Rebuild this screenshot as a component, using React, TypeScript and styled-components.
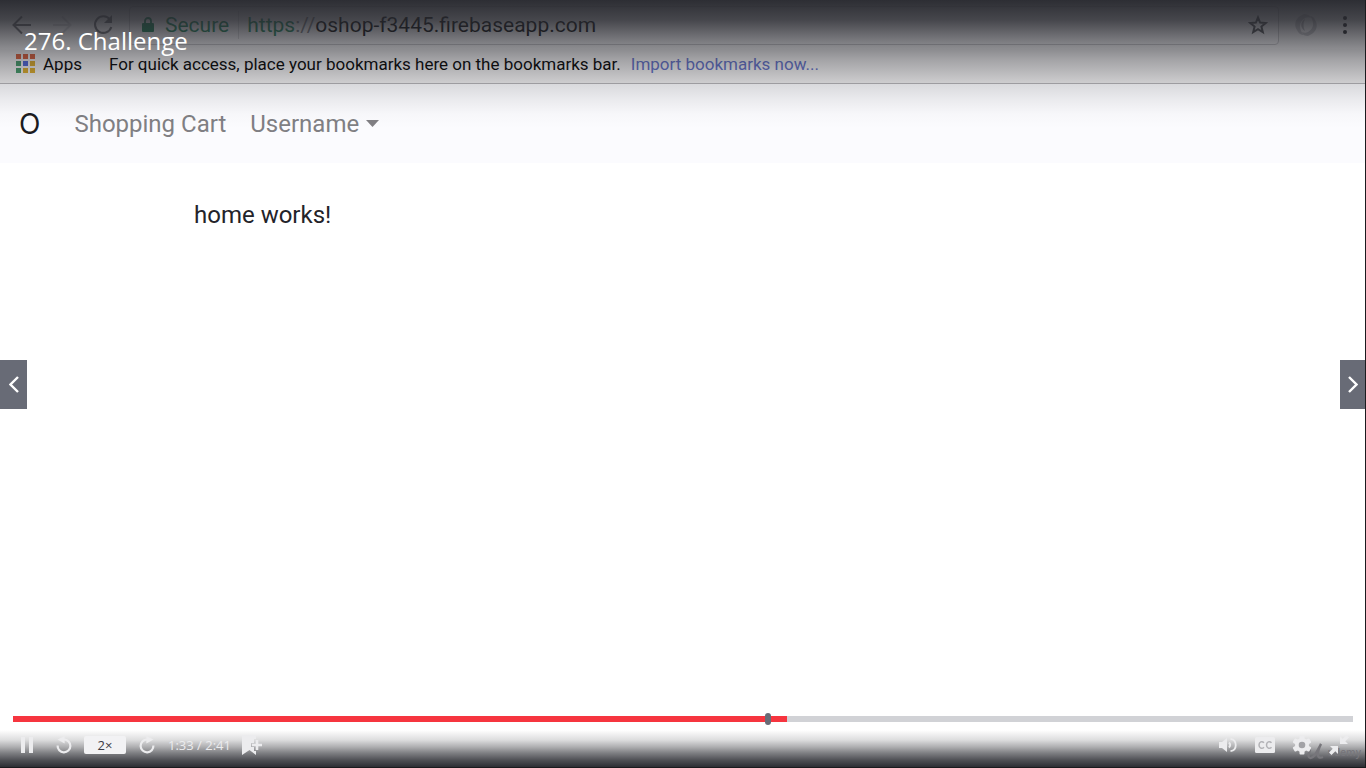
import React from 'react';
import styled, { createGlobalStyle } from 'styled-components';

const GlobalStyle = createGlobalStyle`
  *, *::before, *::after { box-sizing: border-box; }
  body { margin: 0; background: #fff; }
  button, input { font: inherit; }
`;

const ui = `Roboto, "Liberation Sans", sans-serif`;
const brandFont = `Inter, "Liberation Sans", sans-serif`;
const playerFont = `"Open Sans", "Liberation Sans", sans-serif`;

const Player = styled.main`
  position: relative;
  display: flex;
  flex-direction: column;
  min-height: 100vh;
  overflow: hidden;
  background: #fff;
  border-right: 1px solid #1b1b1e;
  font-family: ${ui};
`;

const Browser = styled.section`
  flex: 1;
  display: flex;
  flex-direction: column;
`;

const Toolbar = styled.div`
  display: flex;
  align-items: center;
  height: 49px;
  padding-left: 12px;
  padding-right: 17px;
  background: #f2f1f2;
`;

const IconButton = styled.button<{ $w: number; $gap?: number }>`
  display: flex;
  align-items: center;
  justify-content: center;
  flex: none;
  width: ${(p) => p.$w}px;
  height: 24px;
  margin: 0;
  margin-left: ${(p) => p.$gap ?? 0}px;
  padding: 0;
  border: 0;
  background: none;
  color: inherit;
`;

const AddressBar = styled.div`
  flex: 1;
  display: flex;
  align-items: center;
  height: 39px;
  margin-left: 15px;
  margin-top: 1px;
  padding: 0 10px 0 12px;
  border: 1px solid #c4c3c6;
  border-radius: 4px;
  background: #f5f4f6;
  font-size: 21px;
  line-height: 28px;
`;

const Secure = styled.span`
  display: flex;
  align-items: center;
  gap: 11px;
  padding-right: 9px;
  border-right: 1px solid #d4d3d6;
  color: #128050;
`;

const Url = styled.span`
  flex: 1;
  margin-left: 8px;
  color: #000;
`;

const Scheme = styled.span<{ $muted?: boolean }>`
  color: ${(p) => (p.$muted ? '#77777b' : '#128050')};
`;

const Bookmarks = styled.div`
  display: flex;
  align-items: center;
  height: 35px;
  padding: 0 16px 5px;
  background: #efeeef;
  border-bottom: 1px solid #b4b3b6;
  font-size: 17px;
  line-height: 20px;
  color: #000;
  white-space: nowrap;
`;

const AppsButton = styled.button`
  display: flex;
  align-items: center;
  gap: 8px;
  padding: 0;
  border: 0;
  background: none;
  color: inherit;
  line-height: 20px;
`;

const Hint = styled.span`
  margin-left: 27px;
`;

const ImportLink = styled.a`
  margin-left: 10px;
  color: #5d6cc4;
  text-decoration: none;
`;

const SiteNav = styled.nav`
  display: flex;
  align-items: center;
  height: 79px;
  padding: 0 19px;
  background: #fbfbfe;
  line-height: 32px;
`;

const NavLink = styled.a<{ $brand?: boolean }>`
  display: flex;
  align-items: center;
  gap: 7px;
  margin-right: ${(p) => (p.$brand ? 34 : 24)}px;
  font-family: ${(p) => (p.$brand ? brandFont : ui)};
  font-size: ${(p) => (p.$brand ? 28 : 24)}px;
  color: ${(p) => (p.$brand ? '#1b1b1f' : '#807f83')};
  text-decoration: none;
`;

const PageBody = styled.div`
  padding: 36px 14%;
  padding-left: 194px;
`;

const PageText = styled.p`
  margin: 0;
  font-size: 24px;
  line-height: 32px;
  color: #232329;
`;

const TopShade = styled.header`
  position: absolute;
  inset: 0 0 auto 0;
  height: 130px;
  padding: 24px;
  pointer-events: none;
  background: linear-gradient(
    rgba(41, 42, 48, 0.98) 0,
    rgba(41, 42, 48, 0.86) 20px,
    rgba(41, 42, 48, 0.59) 42px,
    rgba(41, 42, 48, 0.38) 60px,
    rgba(41, 42, 48, 0.17) 83px,
    rgba(41, 42, 48, 0.08) 100px,
    rgba(41, 42, 48, 0.02) 114px,
    rgba(41, 42, 48, 0) 128px
  );
`;

const Title = styled.h1`
  margin: 0;
  font-family: ${playerFont};
  font-size: 24px;
  font-weight: 400;
  line-height: 34px;
  color: #fff;
`;

const SideButton = styled.button<{ $side: 'left' | 'right' }>`
  position: absolute;
  top: calc(50% - 24px);
  ${(p) => p.$side}: 0;
  display: flex;
  align-items: center;
  justify-content: center;
  width: ${(p) => (p.$side === 'left' ? 27 : 25)}px;
  height: 49px;
  padding: 0;
  border: 0;
  background: #686b76;
`;

const BottomBar = styled.footer`
  position: absolute;
  inset: auto 0 0 0;
  height: 56px;
  padding: 4px 12px 0 13px;
  background: linear-gradient(
    rgba(41, 42, 48, 0) 18px,
    rgba(41, 42, 48, 0.16) 28px,
    rgba(41, 42, 48, 0.38) 35px,
    rgba(41, 42, 48, 0.6) 41px,
    rgba(41, 42, 48, 0.82) 48px,
    rgba(41, 42, 48, 0.98) 55px
  );
  border-bottom: 1px solid #1b1b1e;
  font-family: ${playerFont};
`;

const Track = styled.div`
  position: relative;
  display: flex;
  height: 6px;
`;

const Seek = styled.input`
  appearance: none;
  width: 100%;
  height: 6px;
  margin: 0;
  background: linear-gradient(
    90deg,
    #f6353f ${(p) => (Number(p.defaultValue) / Number(p.max)) * 100}%,
    #d1d2d6 0
  );
  &::-webkit-slider-thumb {
    appearance: none;
    width: 1px;
    height: 6px;
    opacity: 0;
  }
`;

const Marker = styled.span`
  position: absolute;
  top: -3px;
  left: 56%;
  width: 6px;
  height: 12px;
  margin-left: 2px;
  border-radius: 3px;
  background: #686b76;
`;

const Controls = styled.div`
  position: relative;
  display: flex;
  align-items: center;
  height: 34px;
  margin-top: 6px;
  padding-right: 4px;
  color: #ececee;
`;

const Speed = styled.button`
  width: 42px;
  height: 18px;
  margin-left: 12px;
  padding: 0;
  border: 0;
  border-radius: 2px;
  background: #f2f2f4;
  color: #3c3b45;
  font-size: 13px;
  line-height: 18px;
`;

const Time = styled.span`
  margin-left: 13px;
  font-size: 13px;
  line-height: 18px;
`;

const Right = styled.div`
  display: flex;
  align-items: center;
  margin-left: auto;
`;

const Watermark = styled.span`
  position: absolute;
  right: 4px;
  bottom: 6px;
  display: flex;
  align-items: center;
  gap: 4px;
  color: #77767b;
  font-size: 10px;
  font-weight: 600;
  line-height: 16px;
`;

const appColors = ['#d75a35', '#d75a35', '#d75a35', '#419766', '#4b62d8', '#d8a727', '#419766', '#d8a727', '#d8a727'];

const AppsIcon = () => (
  <svg width="19" height="19" viewBox="0 0 19 19">
    {appColors.map((c, i) => (
      <rect key={i} x={(i % 3) * 7} y={Math.floor(i / 3) * 7} width="5" height="5" fill={c} />
    ))}
  </svg>
);

const ArrowIcon = ({ flip, color }: { flip?: boolean; color: string }) => (
  <svg width="20" height="20" viewBox="0 0 20 20" fill="none" stroke={color} strokeWidth="2">
    <path d={flip ? 'M1 10H18M10 1.5 18.5 10 10 18.5' : 'M19 10H2M10 1.5 1.5 10 10 18.5'} />
  </svg>
);

const Chevron = ({ flip }: { flip?: boolean }) => (
  <svg width="10" height="17" viewBox="0 0 10 17" fill="none" stroke="#fff" strokeWidth="2.4">
    <path d={flip ? 'M1 1 8.5 8.5 1 16' : 'M9 1 1.5 8.5 9 16'} />
  </svg>
);

const ReplayIcon = ({ forward }: { forward?: boolean }) => (
  <svg width="16" height="18" viewBox="0 0 16 18">
    <g transform={forward ? 'translate(16 0) scale(-1 1)' : undefined}>
      <path d="M1.6 9.5a6.4 6.4 0 1 0 6.4-6" fill="none" stroke="currentColor" strokeWidth="2.2" />
      <path d="M1.5 3.6 8.6 0v7.4z" fill="currentColor" />
    </g>
  </svg>
);

export default function App() {
  return (
    <>
      <GlobalStyle />
      <Player>
        <Browser>
          <Toolbar>
            <IconButton $w={20} aria-label="Back"><ArrowIcon color="#68686c" /></IconButton>
            <IconButton $w={20} $gap={20} aria-label="Forward"><ArrowIcon flip color="#d2d1d4" /></IconButton>
            <IconButton $w={22} $gap={20} aria-label="Reload">
              <svg width="22" height="22" viewBox="0 0 22 22">
                <path d="M18 5.6A8.3 8.3 0 1 0 19.3 13" fill="none" stroke="#68686c" strokeWidth="2.1" />
                <path d="M20 1v8h-8z" fill="#68686c" />
              </svg>
            </IconButton>
            <AddressBar>
              <Secure>
                <svg width="12" height="16" viewBox="0 0 12 16">
                  <rect y="6" width="12" height="9" rx="1" fill="#128050" />
                  <path d="M3 7V4a3 3 0 0 1 6 0v3" fill="none" stroke="#128050" strokeWidth="1.8" />
                </svg>
                Secure
              </Secure>
              <Url><Scheme>https</Scheme><Scheme $muted>://</Scheme>oshop-f3445.firebaseapp.com</Url>
              <IconButton $w={20} aria-label="Bookmark this page">
                <svg width="20" height="20" viewBox="0 0 20 20" fill="none" stroke="#48484c" strokeWidth="2">
                  <path d="m10 2.4 2.1 5.2 5.6.4-4.3 3.6 1.4 5.5-4.8-3-4.8 3 1.4-5.5L2.3 8l5.6-.4z" />
                </svg>
              </IconButton>
            </AddressBar>
            <IconButton $w={24} $gap={15} aria-label="Extension">
              <svg width="24" height="24" viewBox="0 0 24 24">
                <path d="M10 1C2 4-1 11 3 17c1 3 4 5 7 5-5-5-6-13 1-17 2-1 4-1 6 0-1-3-4-4-7-4z" fill="#c4c3c7" />
                <path d="M14 23c8-3 11-10 7-16-1-3-3-4-5-4 4 5 5 12-2 16-2 1-4 1-6 0 1 3 3 4 6 4z" fill="#c0bfc3" />
                <path d="M11 6c-5 3-5 9 0 12-2-4-2-8 0-12z" fill="#b4b3b7" />
              </svg>
            </IconButton>
            <IconButton $w={6} $gap={24} aria-label="Menu">
              <svg width="4" height="20" viewBox="0 0 4 20" fill="#1c1c20">
                <circle cx="2" cy="3" r="2" /><circle cx="2" cy="10" r="2" /><circle cx="2" cy="17" r="2" />
              </svg>
            </IconButton>
          </Toolbar>
          <Bookmarks>
            <AppsButton><AppsIcon />Apps</AppsButton>
            <Hint>For quick access, place your bookmarks here on the bookmarks bar.</Hint>
            <ImportLink href="#import">Import bookmarks now...</ImportLink>
          </Bookmarks>
          <SiteNav>
            <NavLink $brand href="#home">O</NavLink>
            <NavLink href="#cart">Shopping Cart</NavLink>
            <NavLink href="#user">
              Username
              <svg width="13" height="7" viewBox="0 0 13 7" fill="#807f83"><path d="M0 0h13L6.5 7z" /></svg>
            </NavLink>
          </SiteNav>
          <PageBody><PageText>home works!</PageText></PageBody>
        </Browser>

        <TopShade><Title>276. Challenge</Title></TopShade>

        <SideButton $side="left" aria-label="Previous lecture"><Chevron /></SideButton>
        <SideButton $side="right" aria-label="Next lecture"><Chevron flip /></SideButton>

        <BottomBar>
          <Track>
            <Seek type="range" aria-label="Seek" min={0} max={161} defaultValue={93} />
            <Marker />
          </Track>
          <Watermark>
            <svg width="20" height="18" viewBox="0 0 20 18" fill="none" stroke="currentColor" strokeWidth="2.4">
              <path d="M1 7c4-4 6-1 4 3-2 5 2 7 6 2l6-11c-4 8-5 16 2 13" />
            </svg>
            udemy
          </Watermark>
          <Controls>
            <IconButton $w={12} $gap={8} aria-label="Pause">
              <svg width="12" height="16" viewBox="0 0 12 16" fill="currentColor"><path d="M0 0h4v16H0zM8 0h4v16H8z" /></svg>
            </IconButton>
            <IconButton $w={16} $gap={23} aria-label="Rewind"><ReplayIcon /></IconButton>
            <Speed aria-label="Playback speed">2×</Speed>
            <IconButton $w={16} $gap={13} aria-label="Skip forward"><ReplayIcon forward /></IconButton>
            <Time>1:33 / 2:41</Time>
            <IconButton $w={20} $gap={11} aria-label="Add bookmark">
              <svg width="20" height="20" viewBox="0 0 20 20">
                <path d="M0 0h14v4h-2v4H9v4h3v4h2v4l-6.5-5L0 20z" fill="currentColor" />
                <path d="M15 5v10M10 10h10" stroke="currentColor" strokeWidth="2.6" />
              </svg>
            </IconButton>
            <Right>
              <IconButton $w={18} aria-label="Volume">
                <svg width="18" height="16" viewBox="0 0 18 16">
                  <path d="M0 5h3l5-4v14l-5-4H0z" fill="currentColor" />
                  <path d="M10 5.5q2.5 2.5 0 5M11.5 1.8c7 1 7 11.4 0 12.4" fill="none" stroke="currentColor" strokeWidth="1.8" />
                </svg>
              </IconButton>
              <IconButton $w={20} $gap={18} aria-label="Captions">
                <svg width="20" height="16" viewBox="0 0 20 16">
                  <rect width="20" height="16" rx="1.5" fill="currentColor" />
                  <path d="M9 5.8c-2-2.2-5-1-5 2.2s3 4.400 5 2.2M16.5 5.8c-2-2.2-5-1-5 2.2s3 4.400 5 2.2" fill="none" stroke="#b2b2b6" strokeWidth="1.5" />
                </svg>
              </IconButton>
              <IconButton $w={20} $gap={17} aria-label="Settings">
                <svg width="20" height="20" viewBox="0 0 20 20">
                  <g fill="currentColor">
                    {[0, 60, 120].map((a) => (
                      <rect key={a} x="7.5" y="0.5" width="5" height="19" rx="1" transform={`rotate(${a} 10 10)`} />
                    ))}
                    <circle cx="10" cy="10" r="7" />
                  </g>
                  <circle cx="10" cy="10" r="3.3" fill="#a2a2a6" />
                </svg>
              </IconButton>
              <IconButton $w={20} $gap={17} aria-label="Exit full screen">
                <svg width="20" height="20" viewBox="0 0 20 20" fill="currentColor">
                  <path d="M11 1v8h8l-2.7-2.7L20 2.5 17.5 0l-3.8 3.7zM9 19v-8H1l2.7 2.7L0 17.5 2.5 20l3.8-3.700z" />
                </svg>
              </IconButton>
            </Right>
          </Controls>
        </BottomBar>
      </Player>
    </>
  );
}
